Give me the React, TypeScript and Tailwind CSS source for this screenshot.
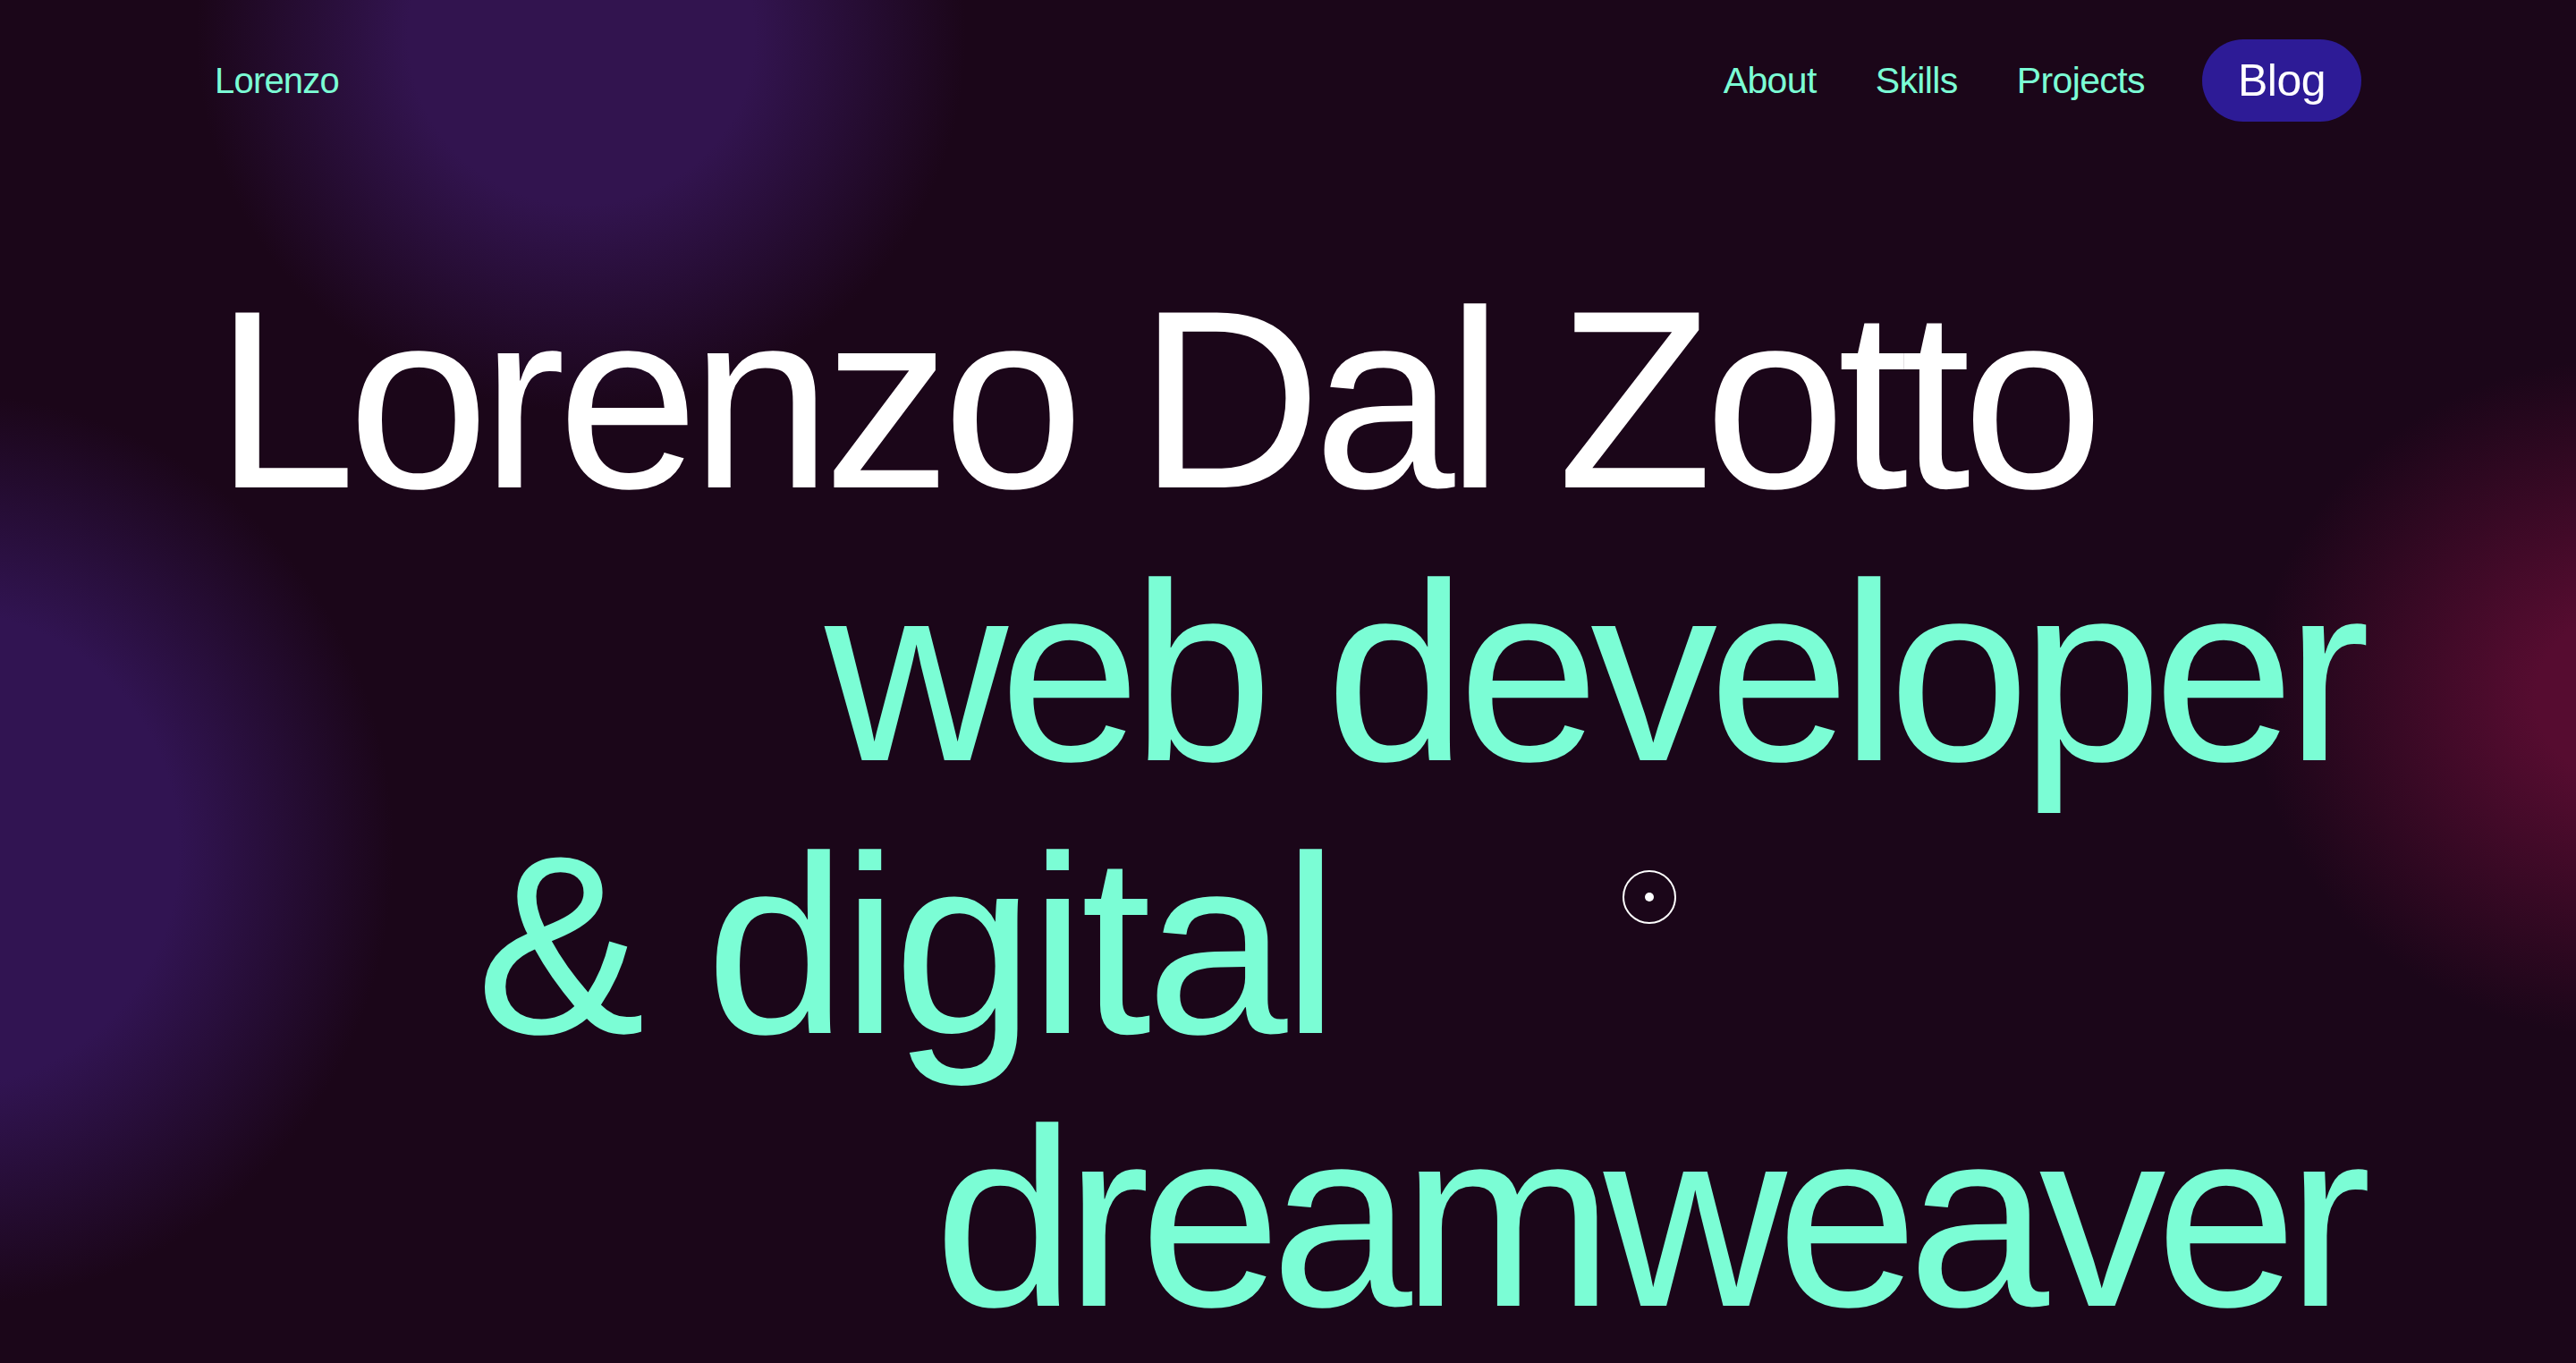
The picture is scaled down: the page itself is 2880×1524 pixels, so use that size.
import React from "react";

const NavLink = ({ label }: { label: string }) => (
  <a href="#" className="text-[41px] leading-none tracking-[-0.015em] text-[#7bfdd5]">
    {label}
  </a>
);

const App = () => {
  return (
    <div className="relative h-[1524px] w-full overflow-hidden bg-[#1b0619] font-['Liberation_Sans',Arial,sans-serif]">
      {/* glow blobs */}
      <div className="pointer-events-none absolute left-[220px] top-[-380px] h-[840px] w-[860px] rounded-full bg-[radial-gradient(closest-side,#32144f_45%,rgba(50,20,79,0)_100%)]" />
      <div className="pointer-events-none absolute left-[-560px] top-[440px] h-[1020px] w-[1000px] rounded-full bg-[radial-gradient(closest-side,#311452_52%,rgba(49,20,82,0)_100%)]" />
      <div className="pointer-events-none absolute left-[2520px] top-[400px] h-[760px] w-[840px] rounded-full bg-[radial-gradient(closest-side,#560c30_25%,rgba(86,12,48,0)_100%)]" />

      <div className="relative z-10 px-[240px] pt-[44px]">
        {/* nav */}
        <nav className="flex h-[92px] items-center justify-between">
          <a href="#" className="text-[40px] leading-none tracking-[-0.02em] text-[#7bfdd5]">
            Lorenzo
          </a>
          <div className="flex items-center gap-[66px]">
            <NavLink label="About" />
            <NavLink label="Skills" />
            <NavLink label="Projects" />
            <a
              href="#"
              className="-ml-[2px] flex h-[92px] items-center rounded-full bg-[#2d1b96] px-[40px] text-[50px] leading-none tracking-[-0.01em] text-white"
            >
              Blog
            </a>
          </div>
        </nav>

        {/* hero */}
        <h1 className="mt-[158px] whitespace-nowrap text-[284px] font-normal leading-[305px] tracking-[-0.035em]">
          <span className="block tracking-[-0.032em] text-white">Lorenzo Dal Zotto</span>
          <span className="block text-right text-[#7bfdd5]">web developer</span>
          <span className="block pl-[292px] tracking-[-0.02em] text-[#7bfdd5]">&amp; digital</span>
          <span className="block text-right tracking-[-0.04em] text-[#7bfdd5]">dreamweaver</span>
        </h1>
      </div>

      {/* cursor */}
      <div className="pointer-events-none absolute left-[1814px] top-[973px] z-20 flex h-[60px] w-[60px] items-center justify-center rounded-full border-2 border-white">
        <div className="h-[10px] w-[10px] rounded-full bg-white" />
      </div>
    </div>
  );
};

export default App;
